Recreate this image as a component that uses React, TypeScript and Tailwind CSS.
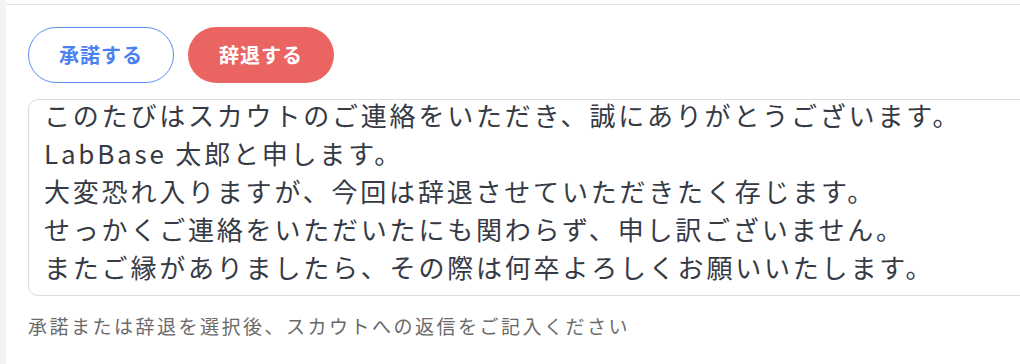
import { useLayoutEffect, useRef } from "react";

const message = [
  "株式会社LabBase 採用ご担当者様",
  "",
  "このたびはスカウトのご連絡をいただき、誠にありがとうございます。",
  "LabBase 太郎と申します。",
  "大変恐れ入りますが、今回は辞退させていただきたく存じます。",
  "せっかくご連絡をいただいたにも関わらず、申し訳ございません。",
  "またご縁がありましたら、その際は何卒よろしくお願いいたします。",
].join("\n");

export default function App() {
  const areaRef = useRef<HTMLTextAreaElement>(null);

  // 返信文は末尾までスクロールした状態で表示
  useLayoutEffect(() => {
    const el = areaRef.current;
    if (el) el.scrollTop = el.scrollHeight;
  }, []);

  return (
    <div
      className="flex h-[364px] w-full overflow-hidden bg-white"
      style={{ fontFamily: '"Noto Sans CJK JP", "Noto Sans", sans-serif' }}
    >
      <div className="w-[6px] shrink-0 bg-[#f4f4f4]" />
      <div className="flex min-w-0 flex-1 flex-col pt-[4px]">
        <div className="border-t border-[#e2e2e2] pl-[22px] pt-[22px]">
          <div className="flex gap-[14px]">
            <button className="flex h-[56px] w-[146px] items-center justify-center rounded-full border border-[#5b8ff5] bg-white text-[20px] font-bold tracking-[1px] text-[#4a82f2]">
              承諾する
            </button>
            <button className="flex h-[56px] w-[146px] items-center justify-center rounded-full bg-[#ea6562] text-[20px] font-bold tracking-[1px] text-white">
              辞退する
            </button>
          </div>

          <textarea
            ref={areaRef}
            readOnly
            defaultValue={message}
            className="mt-[16px] block h-[197px] w-[1020px] resize-none overflow-hidden rounded-[10px] border border-[#dcdcdc] pb-[9px] pl-[15px] pr-4 pt-2 text-[26px] leading-[38px] tracking-[2.8px] text-[#363a44] outline-none"
          />

          <p className="mt-[16px] text-[19px] leading-[28px] tracking-[2.5px] text-[#6a6a6a]">
            承諾または辞退を選択後、スカウトへの返信をご記入ください
          </p>
        </div>
      </div>
    </div>
  );
}
